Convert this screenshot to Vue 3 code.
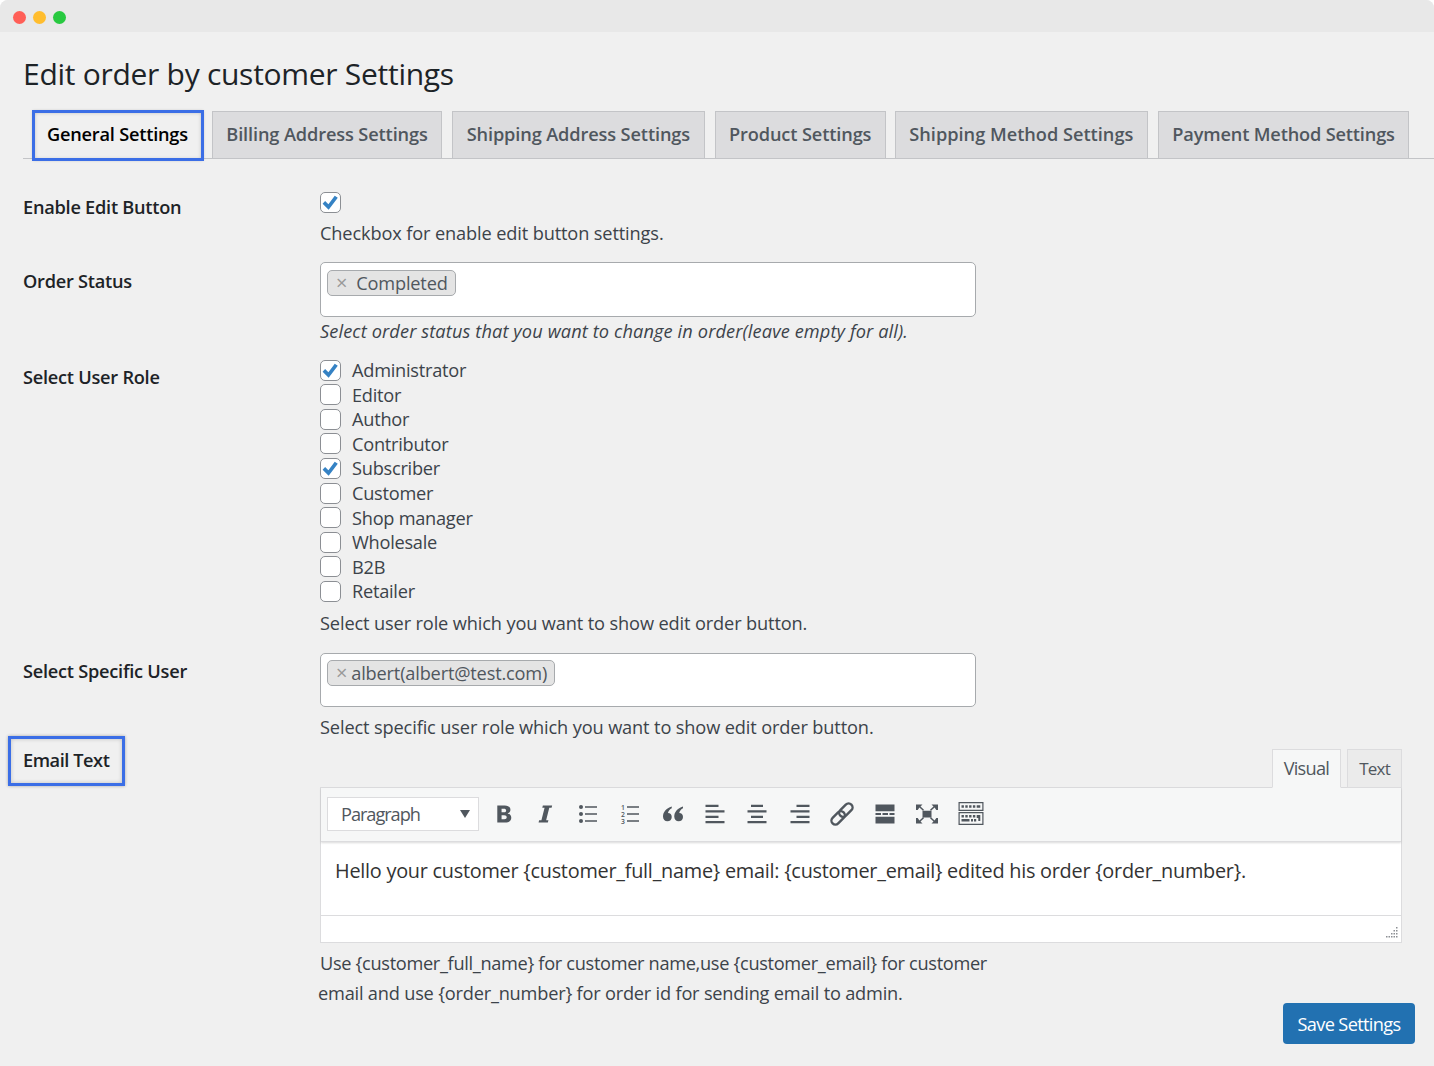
<script setup>
const tabs = ['General Settings','Billing Address Settings','Shipping Address Settings','Product Settings','Shipping Method Settings','Payment Method Settings']
const roles = [['Administrator',true],['Editor',false],['Author',false],['Contributor',false],['Subscriber',true],['Customer',false],['Shop manager',false],['Wholesale',false],['B2B',false],['Retailer',false]]
const tick = 'M4 10.500l2-2.200 2.600 2.600 5-6.800 2.400 1.700-7.200 9.500z'
</script>

<template>
  <div class="window">
    <header class="chrome">
      <span class="dot red"></span><span class="dot yellow"></span><span class="dot green"></span>
    </header>
    <main class="page">
      <h1>Edit order by customer Settings</h1>
      <nav class="tabs">
        <a v-for="(t,i) in tabs" :key="t" class="tab" :class="{active:i===0}">{{ t }}</a>
      </nav>

      <section class="row r1">
        <div class="label">Enable Edit Button</div>
        <div class="field">
          <span class="check on big"><svg viewBox="2.750 2 15 15"><path :d="tick"/></svg></span>
          <p class="desc d1">Checkbox for enable edit button settings.</p>
        </div>
      </section>

      <section class="row r2">
        <div class="label">Order Status</div>
        <div class="field">
          <div class="select"><span class="chip"><i class="x wide">×</i>Completed</span></div>
          <p class="desc it">Select order status that you want to change in order(leave empty for all).</p>
        </div>
      </section>

      <section class="row r3">
        <div class="label">Select User Role</div>
        <div class="field">
          <div class="roles">
            <label v-for="r in roles" :key="r[0]" class="role">
              <span class="check" :class="{on:r[1]}"><svg v-if="r[1]" viewBox="2.750 2 15 15"><path :d="tick"/></svg></span>{{ r[0] }}
            </label>
          </div>
          <p class="desc d3">Select user role which you want to show edit order button.</p>
        </div>
      </section>

      <section class="row r4">
        <div class="label">Select Specific User</div>
        <div class="field">
          <div class="select s2"><span class="chip"><i class="x">×</i>albert(albert@test.com)</span></div>
          <p class="desc d4">Select specific user role which you want to show edit order button.</p>
        </div>
      </section>

      <section class="row r5">
        <div class="label"><span class="hl">Email Text</span></div>
        <div class="field">
          <div class="mode">
            <span class="mode-tab on">Visual</span><span class="mode-tab small">Text</span>
          </div>
          <div class="editor">
            <div class="toolbar">
              <div class="format"><span>Paragraph</span><b class="caret"></b></div>
              <svg class="ic" viewBox="3 3 14 14"><path d="M6 4h5.200c2.600 0 4 1.200 4 3 0 1.300-.8 2.300-2 2.600 1.600.3 2.600 1.400 2.600 3 0 2.200-1.700 3.400-4.400 3.400H6zm3 2.300v2.500h1.600c1 0 1.600-.4 1.600-1.300s-.6-1.200-1.600-1.200zm0 4.600v2.800h1.900c1.100 0 1.700-.5 1.700-1.400s-.6-1.400-1.800-1.400z"/></svg>
              <svg class="ic" viewBox="3 3 14 14"><path d="M8.500 4h6.500l-.4 1.600H13l-2.200 8.800h1.600l-.4 1.600H5.500l.4-1.600h1.600l2.200-8.800H8.100z"/></svg>
              <svg class="ic" viewBox="0 0 20 20"><circle cx="3" cy="3" r="2"/><circle cx="3" cy="10" r="2"/><circle cx="3" cy="17" r="2"/><path d="M7 2.300h12v1.400H7zM7 9.300h12v1.400H7zM7 16.300h12v1.400H7z"/></svg>
              <svg class="ic" viewBox="0 0 20 20"><path d="M7 2.300h12v1.400H7zM7 9.300h12v1.400H7zM7 16.300h12v1.400H7z"/><text x="1" y="5.500" class="num">1</text><text x="1" y="12.500" class="num">2</text><text x="1" y="19.500" class="num">3</text></svg>
              <svg class="ic quote" viewBox="1.500 2 16 16"><path d="M8.500 4C4 5.500 1.500 8.500 1.500 12c0 2.300 1.500 3.800 3.500 3.800s3.500-1.500 3.500-3.500c0-1.800-1.200-3.100-3-3.100.3-1.700 1.500-3 3-3.800zM17.500 4c-4.500 1.500-7 4.500-7 8 0 2.300 1.500 3.800 3.500 3.800s3.500-1.500 3.500-3.500c0-1.800-1.200-3.100-3-3.100.3-1.700 1.500-3 3-3.800z"/></svg>
              <svg class="ic" viewBox="0 0 20 20"><path d="M.5 .8h13v2.200H.5zM.5 6.300h19v2.200H.5zM.5 11.800h13v2.200H.5zM.5 17h19v2.200H.5z"/></svg>
              <svg class="ic" viewBox="0 0 20 20"><path d="M4 .8h12v2.200H4zM.5 6.300h19v2.200H.5zM4 11.800h12v2.200H4zM.5 17h19v2.200H.5z"/></svg>
              <svg class="ic" viewBox="0 0 20 20"><path d="M6.500 .8h13v2.200h-13zM.5 6.300h19v2.200H.5zM6.500 11.800h13v2.200h-13zM.5 17h19v2.200H.5z"/></svg>
              <svg class="ic link" viewBox="0 0 23 23"><rect x="-3.800" y="-7.500" width="7.600" height="15" rx="3.800" transform="translate(7.800 15.200) rotate(45)"/><rect x="-3.800" y="-7.500" width="7.600" height="15" rx="3.800" transform="translate(15.200 7.800) rotate(45)"/></svg>
              <svg class="ic" viewBox="0 0 20 20"><path d="M.5 .5h19v6.700H.5zM.5 12.800h19v6.700H.5zM.5 9h5.500v2H.5zM7.500 9h5.500v2H7.500zM14.500 9h5v2h-5z"/></svg>
              <svg class="ic full" viewBox="0 0 22 19"><path d="M6.500 6.200h9v6.800h-9zM0 0h6.500L4.500 1.900 8 5.300 7 6.200 3.400 3 1.700 5.500 0 5.500zM22 0v5.500h-1.700L18.600 3 15 6.200l-1-.9 3.500-3.400L15.500 0zM0 19v-5.500h1.700L3.400 16 7 12.800l1 .9-3.500 3.400L6.500 19zM22 19h-6.500l2-1.900L14 13.700l1-.9 3.600 3.200 1.700-2.500H22z"/></svg>
              <svg class="ic kb" viewBox="0 0 25 23"><path fill-rule="evenodd" d="M0 0h25v9H0zM1.200 1.200v6.600h22.600V1.200zM0 10h25v13H0zM1.200 11.200v10.600h22.600V11.200z"/><path d="M3 3.200h2.400v2.600H3zM6.800 3.200h2.400v2.600H6.800zM10.600 3.200H13v2.600h-2.400zM14.400 3.200h2.400v2.600h-2.400zM18.200 3.200h3.600v2.600h-3.600zM3 13h2.400v2.500H3zM6.800 13h2.400v2.500H6.800zM10.600 13H13v2.500h-2.400zM14.400 13h2.400v2.500h-2.400zM18.200 13h3.600v6h-2v-3h-1.600zM3 17h8v2.500H3zM12.500 17h2v2.500h-2zM15.500 17h2.200v2.500h-2.200z"/></svg>
            </div>
            <div class="content">Hello your customer {customer_full_name} email: {customer_email} edited his order {order_number}.</div>
            <div class="status"><svg class="grip" viewBox="0 0 13 13"><path d="M11 1h1.500v1.500H11zM11 4h1.500v1.500H11zM8.500 4H10v1.500H8.500zM11 7h1.500v1.500H11zM8.500 7H10v1.500H8.500zM6 7h1.500v1.500H6zM11 10h1.500v1.500H11zM8.500 10H10v1.500H8.500zM6 10h1.500v1.500H6zM3.500 10H5v1.500H3.500zM1 10h1.500v1.500H1z"/></svg></div>
          </div>
          <p class="desc d5"><span class="line1">Use {customer_full_name} for customer name,use {customer_email} for customer</span><br><span class="line2">email and use {order_number} for order id for sending email to admin.</span></p>
        </div>
      </section>

      <div class="actions"><button class="save">Save Settings</button></div>
    </main>
  </div>
</template>

<style>
html, body { margin: 0; background: #fff; }
</style>

<style scoped>
.window { width: 1434px; height: 1066px; box-sizing: border-box; background: #f0f0f0; border-radius: 8px 8px 0 0; overflow: hidden; font-family: "Open Sans", "Noto Sans", sans-serif; color: #3c434a; font-size: 18.2px; letter-spacing: -.25px; }
.chrome { height: 32px; background: #e8e8e8; display: flex; align-items: center; gap: 7px; padding-left: 13px; padding-top: 2px; box-sizing: border-box; }
.dot { width: 13px; height: 13px; border-radius: 50%; }
.red { background: #ff5f57; } .yellow { background: #ffbd2e; } .green { background: #28c940; }
.page { padding-left: 23px; }
h1 { margin: 0; padding-top: 22px; height: 57px; font-size: 30px; font-weight: 400; line-height: 40px; color: #1d2327; letter-spacing: -.28px; }
.tabs { display: flex; height: 48px; box-sizing: border-box; border-bottom: 1px solid #c3c4c7; padding-left: 10px; gap: 10px; }
.tab { height: 47px; box-sizing: border-box; background: #dcdcde; border: 1px solid #c3c4c7; border-bottom: 0; padding: 0 13.500px; line-height: 45px; font-weight: 600; color: #50575e; white-space: nowrap; letter-spacing: -.13px; }
.tab:nth-child(5) { letter-spacing: -.01px; margin-left: -1px; }
.tab:nth-child(6) { letter-spacing: -.17px; }
.active { background: #f0f0f0; color: #000; outline: 3px solid #3b6ee6; outline-offset: -2px; height: 49px; box-shadow: inset 0 0 4px rgba(0,0,0,.3), 0 0 3px rgba(0,0,0,.25); position: relative; z-index: 1; margin-right: -1px; letter-spacing: -.22px; padding: 0 14px 0 13px; }
.row { display: grid; grid-template-columns: 297px 1fr; }
.label { font-weight: 600; color: #1d2327; }
.field { min-width: 0; }
.desc { margin: 0; line-height: 26px; letter-spacing: -.13px; }
.it { font-style: italic; letter-spacing: .12px; margin-top: 1px; }
.r1 { padding-top: 33px; height: 103px; box-sizing: border-box; }
.r1 .label { line-height: 30px; }
.r2 { height: 96px; }
.r2 .label { padding-top: 6px; line-height: 26px; }
.d1 { margin-top: 7px; }
.check { display: block; width: 21px; height: 21px; box-sizing: border-box; background: #fff; border: 1px solid #8c8f94; border-radius: 5px; flex: none; }
.check svg { display: block; width: 19px; height: 19px; fill: #3582c4; }
.select { width: 656px; height: 55px; box-sizing: border-box; background: #fff; border: 1px solid #a7aaad; border-radius: 5px; padding: 7px 6px; }
.chip { display: inline-flex; align-items: center; height: 26px; box-sizing: border-box; background: #e4e4e4; border: 1px solid #a7aaad; border-radius: 5px; padding: 0 7px 0 8px; color: #50575e; letter-spacing: -.18px; }
.x { font-style: normal; color: #999; margin-right: 4px; font-size: 20px; line-height: 1; }
.x.wide { margin-right: 9px; }
.r3 { height: 295px; }
.r3 .label { padding-top: 6px; line-height: 26px; }
.roles { display: flex; flex-direction: column; }
.role { display: flex; align-items: center; gap: 11px; height: 24.55px; }
.d3 { margin-top: 7px; }
.r4 { height: 96px; }
.r4 .label { padding-top: 5px; line-height: 26px; }
.s2 { height: 54px; padding-top: 6px; }
.d4 { margin-top: 7px; }
.r5 { position: relative; }
.r5 .label { margin-top: -1px; }
.hl { display: inline-block; margin-left: -15px; padding: 0 13px 0 12px; height: 50px; line-height: 42px; border: 3px solid #3b6ee6; box-sizing: border-box; box-shadow: inset 0 0 4px rgba(0,0,0,.2), 0 0 3px rgba(0,0,0,.3); margin-top: -12px; letter-spacing: -.45px; }
.mode { display: flex; justify-content: flex-end; gap: 6px; height: 39px; padding-right: 32px; box-sizing: border-box; margin-bottom: -1px; position: relative; z-index: 1; }
.mode-tab { height: 39px; box-sizing: border-box; border: 1px solid #dcdcde; background: #ebebeb; padding: 0 11px; line-height: 37px; color: #50575e; letter-spacing: -.75px; }
.mode-tab.small { font-size: 17px; }
.mode-tab.on { background: #f6f7f7; border-bottom-color: #f6f7f7; }
.editor { width: 1082px; height: 156px; box-sizing: border-box; border: 1px solid #dcdcde; background: #fff; }
.toolbar { height: 54px; box-sizing: border-box; background: #f6f7f7; border-bottom: 1px solid #dcdcde; box-shadow: 0 1px 2px rgba(0,0,0,.15); display: flex; align-items: center; padding-left: 6px; padding-bottom: 2px; }
.format { width: 152px; height: 34px; box-sizing: border-box; background: #fff; border: 1px solid #dcdcde; display: flex; align-items: center; justify-content: space-between; padding: 0 8px 0 13px; color: #50575e; margin-right: 14px; letter-spacing: -1.05px; }
.caret { width: 0; height: 0; border-left: 5.5px solid transparent; border-right: 5.5px solid transparent; border-top: 8px solid #50575e; }
.ic { width: 20px; height: 20px; fill: #50575e; margin-right: 22.4px; flex: none; }
.num { font-size: 6.800px; font-weight: 600; font-family: "Open Sans", sans-serif; letter-spacing: 0; }
.link { fill: none; stroke: #50575e; stroke-width: 2.300; width: 24px; height: 24px; margin: 0 20.400px 0 -2px; }
.full { width: 22px; margin: 0 20px 0 -.5px; }
.kb { width: 26px; height: 23px; margin-right: 0; margin-left: -.5px; }
.content { height: 73px; box-sizing: border-box; padding: 16px 14px 0; line-height: 26px; color: #333; font-size: 19.86px; }
.status { height: 27px; border-top: 1px solid #dcdcde; position: relative; box-sizing: border-box; }
.grip { position: absolute; right: 3px; bottom: 3px; width: 13px; height: 13px; fill: #8c8f94; }
.d5 { margin-top: 5px; line-height: 30px; }
.line1 { letter-spacing: -.32px; }
.line2 { margin-left: -2px; letter-spacing: -.2px; }
.actions { display: flex; justify-content: flex-end; padding-right: 19px; margin-top: -5px; }
.save { width: 132px; height: 41px; background: #2271b1; border: 0; border-radius: 4px; color: #fff; font: inherit; letter-spacing: -.65px; padding: 0; }
</style>
